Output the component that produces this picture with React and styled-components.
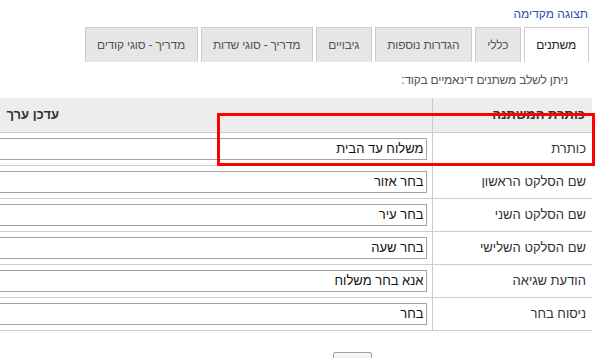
import React from 'react';
import styled, { createGlobalStyle } from 'styled-components';

const GlobalStyle = createGlobalStyle`
  html, body {
    margin: 0;
    padding: 0;
    background: #fff;
    overflow: hidden;
  }
  body {
    font-family: "Liberation Sans", Arial, "DejaVu Sans", sans-serif;
    font-size: 13px;
    color: #333;
  }
`;

const tabs = [
  'משתנים',
  'כללי',
  'הגדרות נוספות',
  'גיבויים',
  'מדריך - סוגי שדות',
  'מדריך - סוגי קודים',
];

const rows = [
  { label: 'כותרת', value: 'משלוח עד הבית' },
  { label: 'שם הסלקט הראשון', value: 'בחר אזור' },
  { label: 'שם הסלקט השני', value: 'בחר עיר' },
  { label: 'שם הסלקט השלישי', value: 'בחר שעה' },
  { label: 'הודעת שגיאה', value: 'אנא בחר משלוח' },
  { label: 'ניסוח בחר', value: 'בחר' },
];

export default function App() {
  return (
    <Page dir="rtl">
      <GlobalStyle />
      <TopBar>
        <PreviewLink href="#">תצוגה מקדימה</PreviewLink>
      </TopBar>
      <Tabs>
        {tabs.map((t, i) => (
          <Tab key={t} $active={i === 0}>
            {t}
          </Tab>
        ))}
      </Tabs>
      <Note>ניתן לשלב משתנים דינאמיים בקוד:</Note>
      <TableWrap>
        <VarTable>
          <thead>
            <tr>
              <HeadCell $label>כותרת המשתנה</HeadCell>
              <HeadCell>עדכן ערך</HeadCell>
            </tr>
          </thead>
          <tbody>
            {rows.map((r) => (
              <tr key={r.label}>
                <LabelCell>{r.label}</LabelCell>
                <ValueCell>
                  <ValueInput defaultValue={r.value} />
                </ValueCell>
              </tr>
            ))}
          </tbody>
        </VarTable>
        <Highlight />
      </TableWrap>
      <Actions>
        <SaveButton type="button" />
      </Actions>
    </Page>
  );
}

const Page = styled.div`
  direction: rtl;
  width: 607px;
  height: 358px;
  overflow: hidden;
  padding-right: 15px;
  box-sizing: border-box;
`;

const TopBar = styled.div`
  padding-top: 6px;
  padding-right: 4px;
  height: 16px;
  line-height: 16px;
`;

const PreviewLink = styled.a`
  color: #2554a8;
  font-size: 12px;
  text-decoration: none;
`;

const Tabs = styled.div`
  display: flex;
  gap: 3px;
  margin-top: 5px;
  padding-right: 3px;
`;

const Tab = styled.div`
  flex: none;
  height: 35px;
  line-height: 35px;
  padding: 0 12px 0 11px;
  box-sizing: border-box;
  border: 1px solid #ccc;
  border-bottom: none;
  background: ${(p) => (p.$active ? '#fff' : '#e6e6e6')};
  color: ${(p) => (p.$active ? '#222' : '#555')};
  font-size: 12px;
  letter-spacing: -0.2px;
  white-space: nowrap;
`;

const Note = styled.div`
  margin-top: 9px;
  padding-right: 24px;
  line-height: 18px;
  color: #555;
  font-size: 12px;
  letter-spacing: -0.2px;
`;

const TableWrap = styled.div`
  position: relative;
  width: 958px;
  margin-top: 9px;
`;

const VarTable = styled.table`
  width: 100%;
  border-collapse: collapse;
  table-layout: fixed;
`;

const HeadCell = styled.th`
  height: 34px;
  padding: 0 7px;
  box-sizing: border-box;
  background: #ededed;
  border-bottom: 1px solid #ccc;
  border-left: ${(p) => (p.$label ? '1px solid #ccc' : 'none')};
  width: ${(p) => (p.$label ? '160px' : 'auto')};
  text-align: ${(p) => (p.$label ? 'right' : 'center')};
  font-weight: bold;
  font-size: 13px;
  color: #333;
`;

const LabelCell = styled.td`
  height: 33px;
  padding: 0 6px;
  box-sizing: border-box;
  border-bottom: 1px solid #ccc;
  border-left: 1px solid #ccc;
  text-align: right;
  color: #333;
  font-size: 13px;
`;

const ValueCell = styled.td`
  height: 33px;
  padding: 0 5px;
  box-sizing: border-box;
  border-bottom: 1px solid #ccc;
`;

const ValueInput = styled.input`
  display: block;
  width: 100%;
  height: 22px;
  box-sizing: border-box;
  border: 1px solid #a3a3a3;
  padding: 0 2px;
  font-family: inherit;
  font-size: 13px;
  color: #111;
  text-align: right;
  direction: rtl;
  outline: none;
`;

const Highlight = styled.div`
  position: absolute;
  top: 15px;
  right: -3px;
  width: 378px;
  height: 53px;
  box-sizing: border-box;
  border: 3px solid #f00;
  pointer-events: none;
`;

const Actions = styled.div`
  margin-top: 21px;
  padding-right: 220px;
`;

const SaveButton = styled.button`
  width: 39px;
  height: 22px;
  border: 1px solid #a0a0a0;
  border-radius: 2px;
  background: linear-gradient(#f6f6f6, #e4e4e4);
`;
